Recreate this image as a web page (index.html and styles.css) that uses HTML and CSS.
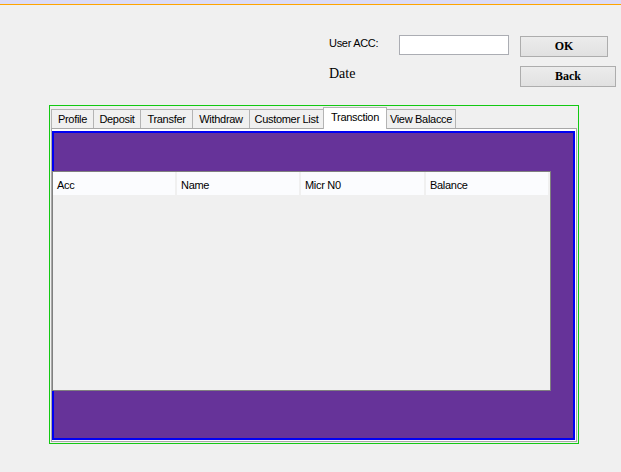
FILE: index.html
```html
<!DOCTYPE html>
<html>
<head>
<meta charset="utf-8">
<title>Transaction</title>
<link rel="stylesheet" href="styles.css">
</head>
<body>
<div class="topbar"></div>
<div class="header">
  <div class="label">User ACC:</div>
  <input class="textbox" type="text">
  <button class="btn btn-ok">OK</button>
  <div class="date">Date</div>
  <div class="spacer"></div>
  <button class="btn btn-back">Back</button>
</div>
<div class="frame">
  <div class="tabstrip">
    <div class="tab w-profile">Profile</div>
    <div class="tab w-deposit">Deposit</div>
    <div class="tab w-transfer">Transfer</div>
    <div class="tab w-withdraw">Withdraw</div>
    <div class="tab w-customer">Customer List</div>
    <div class="tab tab-selected w-trans">Transction</div>
    <div class="tab tab-last w-view">View Balacce</div>
  </div>
  <div class="tabpage">
    <div class="panel">
      <div class="grid">
        <div class="grid-header">
          <div class="hcell c1">Acc</div>
          <div class="hcell c2">Name</div>
          <div class="hcell c3">Micr N0</div>
          <div class="hcell c4">Balance</div>
        </div>
      </div>
    </div>
  </div>
</div>
</body>
</html>
```

FILE: styles.css
```css
* { box-sizing: border-box; }

html, body {
  margin: 0;
  padding: 0;
  background: #f0f0f0;
  font-family: "Liberation Sans", Arial, sans-serif;
  font-size: 11px;
  letter-spacing: -0.3px;
  color: #000;
  width: 621px;
  height: 472px;
  overflow: hidden;
}

.topbar {
  height: 5px;
  background: #dcdcf6;
  border-bottom: 1px solid #ffa500;
}

.header {
  display: grid;
  grid-template-columns: 70px 110px 107px;
  grid-template-rows: 22px 21px;
  row-gap: 9px;
  padding: 30px 0 0 329px;
  height: 100px;
}

.label {
  line-height: 15px;
  padding-top: 1px;
}

.textbox {
  width: 110px;
  height: 20px;
  margin: 0;
  border: 1px solid #abadb3;
  background: #fff;
  padding: 0 3px;
  outline: none;
}

.btn {
  margin: 0 0 0 11px;
  height: 21px;
  padding: 0;
  border: 1px solid #adadad;
  background: linear-gradient(#ececec, #e1e1e1);
  font-family: "Liberation Serif", "Times New Roman", serif;
  font-weight: bold;
  font-size: 12px;
  letter-spacing: 0;
  color: #000;
  line-height: 19px;
}

.btn-ok {
  width: 88px;
  margin-top: 1px;
}

.btn-back {
  width: 96px;
}

.date {
  font-family: "Liberation Serif", "Times New Roman", serif;
  font-size: 14px;
  letter-spacing: 0;
  line-height: 14px;
  padding-top: 1px;
}

.frame {
  margin-left: 49px;
  width: 530px;
  height: 339px;
  border: 1px solid #12c912;
  padding: 1px;
  display: flex;
  flex-direction: column;
}

.tabstrip {
  display: flex;
  align-items: flex-end;
  height: 21px;
  flex: none;
}

.tab {
  height: 19px;
  line-height: 18px;
  text-align: center;
  background: #f0f0f0;
  border-top: 1px solid #b4b4b4;
  border-left: 1px solid #b4b4b4;
  white-space: nowrap;
}

.tab-selected {
  height: 22px;
  margin-bottom: -1px;
  background: #fff;
  border-right: 1px solid #b4b4b4;
  position: relative;
  z-index: 1;
}

.tab-last {
  border-left: none;
  border-right: 1px solid #b4b4b4;
}

.w-profile { width: 42px; }
.w-deposit { width: 47px; }
.w-transfer { width: 52px; }
.w-withdraw { width: 57px; }
.w-customer { width: 74px; }
.w-trans { width: 64px; }
.w-view { width: 69px; }

.tabpage {
  height: 314px;
  border: 1px solid #a8a8a8;
  background: #fff;
  padding: 2px 1px 1px 0;
  display: flex;
  flex-direction: column;
}

.panel {
  flex: 1;
  background: #663399;
  box-shadow: inset 0 0 0 2px #0000f2;
  padding-top: 40px;
}

.grid {
  width: 499px;
  height: 220px;
  border: 1px solid #808080;
  background: #f0f0f0;
}

.grid-header {
  display: flex;
  gap: 2px;
  height: 23px;
}

.hcell {
  background: #fbfcfe;
  padding: 3px 0 0 4px;
  line-height: 20px;
}

.c1 { width: 122px; }
.c2 { width: 122px; }
.c3 { width: 123px; }
.c4 { width: 122px; }
```
